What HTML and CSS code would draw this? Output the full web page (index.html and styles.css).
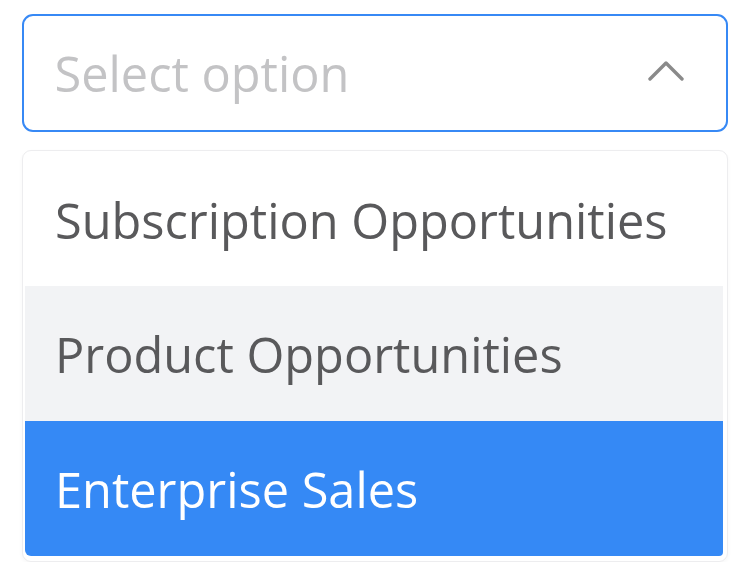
FILE: index.html
```html
<!DOCTYPE html>
<html>
<head>
<meta charset="utf-8">
<link rel="stylesheet" href="styles.css">
</head>
<body>
<div class="wrap">
  <div class="select">
    <span class="placeholder">Select option</span>
    <svg class="chevron" width="36" height="22" viewBox="0 0 36 22"><path d="M2 20 L18 4 L34 20" fill="none" stroke="#8a8a8a" stroke-width="3.4" stroke-linecap="round" stroke-linejoin="round"/></svg>
  </div>
  <div class="menu">
    <div class="item item-first">Subscription Opportunities</div>
    <div class="item item-hover">Product Opportunities</div>
    <div class="item item-active">Enterprise Sales</div>
  </div>
</div>
</body>
</html>
```

FILE: styles.css
```css
html, body {
  margin: 0;
  padding: 0;
  background: #ffffff;
}
body {
  font-family: "Open Sans", "Noto Sans", sans-serif;
}
.wrap {
  width: 706px;
  padding: 14px 16px 0 22px;
}
.select {
  box-sizing: border-box;
  height: 118px;
  border: 2.5px solid #3789f5;
  border-radius: 11px;
  display: flex;
  align-items: center;
  justify-content: space-between;
  padding: 0 42px 0 30.5px;
}
.placeholder {
  font-size: 48.7px;
  color: #c3c3c5;
}
.chevron {
  display: block;
  margin-top: -6px;
}
.menu {
  box-sizing: border-box;
  margin-top: 18px;
  height: 412px;
  border: 1px solid #ededef;
  border-radius: 9px;
  padding: 2px 4px 5px 2px;
  background: #fff;
  box-shadow: 0 2px 4px rgba(0, 0, 0, 0.035);
}
.item {
  display: flex;
  align-items: center;
  height: 135px;
  padding-left: 30px;
  font-size: 48.7px;
  color: #59595b;
}
.item-first {
  height: 133px;
}
.item-hover {
  background: #f2f3f5;
}
.item-active {
  background: #3589f5;
  color: #ffffff;
  border-radius: 0 0 4px 6px;
}
```
